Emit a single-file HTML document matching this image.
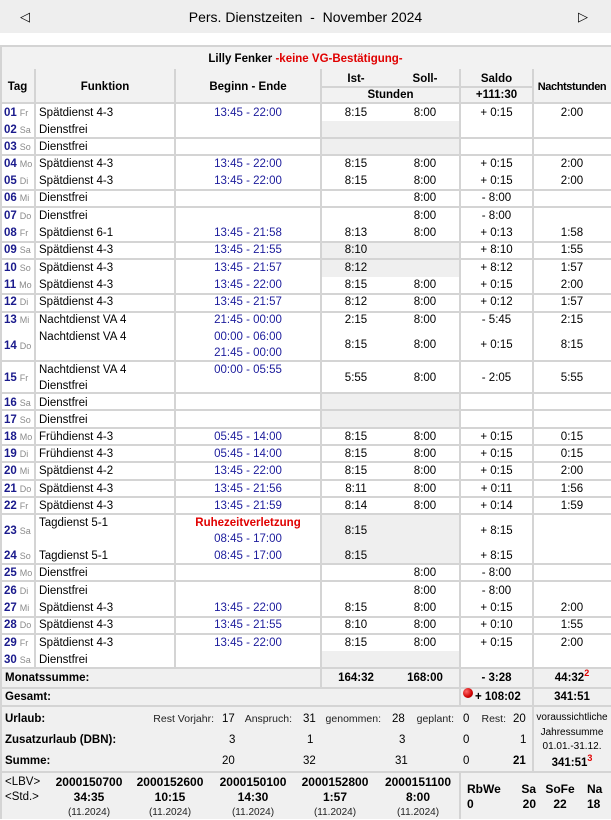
<!DOCTYPE html>
<html><head><meta charset="utf-8"><style>
*{margin:0;padding:0;box-sizing:border-box}
body{width:611px;height:819px;overflow:hidden;background:#fff;font-family:"Liberation Sans",Arial,sans-serif;font-size:11.5px;color:#000;position:relative}
div,span.a{position:absolute}
.h{height:2px;background:#d4d4d4;left:0;width:611px}
.v{width:2px;background:#d4d4d4}
.g{background:#efefef}
.t{position:absolute;white-space:nowrap;line-height:14px;height:14px}
.d{left:4px;color:#1a1a8c;font-weight:bold;font-size:11.5px}
.d i{font-style:normal;font-weight:normal;color:#8a8a8a;font-size:9px;margin-left:3px}
.f{left:39px}
.tm{left:175px;width:146px;text-align:center;color:#1c1c9c}
.is{left:326px;width:60px;text-align:center}
.so{left:395px;width:60px;text-align:center}
.sa{left:460px;width:73px;text-align:center}
.na{left:533px;width:78px;text-align:center}
.b{font-weight:bold}
.s{font-size:10.5px;color:#222}
</style></head><body>
<div class="g" style="left:0;top:0;width:611px;height:33px;background:#eeeeee"></div>
<div class="t" style="left:20px;top:10px;font-size:13px">◁</div>
<div class="t" style="left:578px;top:10px;font-size:13px">▷</div>
<div class="t" style="left:0;width:611px;text-align:center;top:10px;font-size:14px">Pers. Dienstzeiten &nbsp;-&nbsp; November 2024</div>

<div class="g" style="left:0;top:46px;width:611px;height:57px;background:#f2f2f2"></div>
<div class="g" style="left:321px;top:121px;width:139px;height:34px"></div>
<div class="g" style="left:321px;top:242px;width:139px;height:35px"></div>
<div class="g" style="left:321px;top:393px;width:139px;height:35px"></div>
<div class="g" style="left:321px;top:514px;width:139px;height:50px"></div>
<div class="g" style="left:321px;top:651px;width:139px;height:17px"></div>
<div class="g" style="left:0;top:668px;width:611px;height:151px;background:#f0f0f0"></div>

<div class="h" style="top:45px"></div>
<div class="h" style="top:102px"></div>
<div class="h" style="top:137px"></div>
<div class="h" style="top:154px"></div>
<div class="h" style="top:189px"></div>
<div class="h" style="top:206px"></div>
<div class="h" style="top:241px"></div>
<div class="h" style="top:258px"></div>
<div class="h" style="top:293px"></div>
<div class="h" style="top:311px"></div>
<div class="h" style="top:360px"></div>
<div class="h" style="top:392px"></div>
<div class="h" style="top:409px"></div>
<div class="h" style="top:427px"></div>
<div class="h" style="top:444px"></div>
<div class="h" style="top:461px"></div>
<div class="h" style="top:479px"></div>
<div class="h" style="top:496px"></div>
<div class="h" style="top:513px"></div>
<div class="h" style="top:563px"></div>
<div class="h" style="top:580px"></div>
<div class="h" style="top:616px"></div>
<div class="h" style="top:633px"></div>
<div class="h" style="top:667px"></div>
<div class="h" style="top:687px"></div>
<div class="h" style="top:705px"></div>
<div class="h" style="top:771px"></div>
<div class="h" style="top:86px;left:321px;width:212px"></div>
<div class="v" style="left:0;top:45px;height:774px"></div>
<div class="v" style="left:34px;top:69px;height:599px"></div>
<div class="v" style="left:174px;top:69px;height:599px"></div>
<div class="v" style="left:320px;top:69px;height:619px"></div>
<div class="v" style="left:459px;top:69px;height:636px"></div>
<div class="v" style="left:532px;top:69px;height:703px"></div>
<div class="v" style="left:459px;top:771px;height:48px"></div>

<div class="t b" style="left:0;width:611px;text-align:center;top:52px">Lilly Fenker <span style="color:#e00000">-keine VG-Bestätigung-</span></div>
<div class="t b" style="left:0;width:35px;text-align:center;top:80px">Tag</div>
<div class="t b" style="left:35px;width:140px;text-align:center;top:80px">Funktion</div>
<div class="t b" style="left:175px;width:146px;text-align:center;top:80px">Beginn - Ende</div>
<div class="t b" style="left:326px;width:60px;text-align:center;top:72px">Ist-</div>
<div class="t b" style="left:395px;width:60px;text-align:center;top:72px">Soll-</div>
<div class="t b" style="left:321px;width:139px;text-align:center;top:88px">Stunden</div>
<div class="t b sa" style="top:72px">Saldo</div>
<div class="t b sa" style="top:88px">+111:30</div>
<div class="t b na" style="top:80px;font-size:11px;letter-spacing:-0.4px">Nachtstunden</div>

<div class="t d" style="top:106px">01<i>Fr</i></div><div class="t f" style="top:106px">Spätdienst 4-3</div><div class="t tm" style="top:106px">13:45 - 22:00</div><div class="t is" style="top:106px">8:15</div><div class="t so" style="top:106px">8:00</div><div class="t sa" style="top:106px">+ 0:15</div><div class="t na" style="top:106px">2:00</div>
<div class="t d" style="top:123px">02<i>Sa</i></div><div class="t f" style="top:123px">Dienstfrei</div>
<div class="t d" style="top:140px">03<i>So</i></div><div class="t f" style="top:140px">Dienstfrei</div>
<div class="t d" style="top:157px">04<i>Mo</i></div><div class="t f" style="top:157px">Spätdienst 4-3</div><div class="t tm" style="top:157px">13:45 - 22:00</div><div class="t is" style="top:157px">8:15</div><div class="t so" style="top:157px">8:00</div><div class="t sa" style="top:157px">+ 0:15</div><div class="t na" style="top:157px">2:00</div>
<div class="t d" style="top:174px">05<i>Di</i></div><div class="t f" style="top:174px">Spätdienst 4-3</div><div class="t tm" style="top:174px">13:45 - 22:00</div><div class="t is" style="top:174px">8:15</div><div class="t so" style="top:174px">8:00</div><div class="t sa" style="top:174px">+ 0:15</div><div class="t na" style="top:174px">2:00</div>
<div class="t d" style="top:191px">06<i>Mi</i></div><div class="t f" style="top:191px">Dienstfrei</div><div class="t so" style="top:191px">8:00</div><div class="t sa" style="top:191px">- 8:00</div>
<div class="t d" style="top:209px">07<i>Do</i></div><div class="t f" style="top:209px">Dienstfrei</div><div class="t so" style="top:209px">8:00</div><div class="t sa" style="top:209px">- 8:00</div>
<div class="t d" style="top:226px">08<i>Fr</i></div><div class="t f" style="top:226px">Spätdienst 6-1</div><div class="t tm" style="top:226px">13:45 - 21:58</div><div class="t is" style="top:226px">8:13</div><div class="t so" style="top:226px">8:00</div><div class="t sa" style="top:226px">+ 0:13</div><div class="t na" style="top:226px">1:58</div>
<div class="t d" style="top:243px">09<i>Sa</i></div><div class="t f" style="top:243px">Spätdienst 4-3</div><div class="t tm" style="top:243px">13:45 - 21:55</div><div class="t is" style="top:243px">8:10</div><div class="t sa" style="top:243px">+ 8:10</div><div class="t na" style="top:243px">1:55</div>
<div class="t d" style="top:261px">10<i>So</i></div><div class="t f" style="top:261px">Spätdienst 4-3</div><div class="t tm" style="top:261px">13:45 - 21:57</div><div class="t is" style="top:261px">8:12</div><div class="t sa" style="top:261px">+ 8:12</div><div class="t na" style="top:261px">1:57</div>
<div class="t d" style="top:278px">11<i>Mo</i></div><div class="t f" style="top:278px">Spätdienst 4-3</div><div class="t tm" style="top:278px">13:45 - 22:00</div><div class="t is" style="top:278px">8:15</div><div class="t so" style="top:278px">8:00</div><div class="t sa" style="top:278px">+ 0:15</div><div class="t na" style="top:278px">2:00</div>
<div class="t d" style="top:295px">12<i>Di</i></div><div class="t f" style="top:295px">Spätdienst 4-3</div><div class="t tm" style="top:295px">13:45 - 21:57</div><div class="t is" style="top:295px">8:12</div><div class="t so" style="top:295px">8:00</div><div class="t sa" style="top:295px">+ 0:12</div><div class="t na" style="top:295px">1:57</div>
<div class="t d" style="top:313px">13<i>Mi</i></div><div class="t f" style="top:313px">Nachtdienst VA 4</div><div class="t tm" style="top:313px">21:45 - 00:00</div><div class="t is" style="top:313px">2:15</div><div class="t so" style="top:313px">8:00</div><div class="t sa" style="top:313px">- 5:45</div><div class="t na" style="top:313px">2:15</div>
<div class="t d" style="top:339px">14<i>Do</i></div><div class="t f" style="top:330px">Nachtdienst VA 4</div><div class="t tm" style="top:330px">00:00 - 06:00</div><div class="t tm" style="top:346px">21:45 - 00:00</div><div class="t is" style="top:338px">8:15</div><div class="t so" style="top:338px">8:00</div><div class="t sa" style="top:338px">+ 0:15</div><div class="t na" style="top:338px">8:15</div>
<div class="t d" style="top:371px">15<i>Fr</i></div><div class="t f" style="top:363px">Nachtdienst VA 4</div><div class="t f" style="top:379px">Dienstfrei</div><div class="t tm" style="top:363px">00:00 - 05:55</div><div class="t is" style="top:371px">5:55</div><div class="t so" style="top:371px">8:00</div><div class="t sa" style="top:371px">- 2:05</div><div class="t na" style="top:371px">5:55</div>
<div class="t d" style="top:396px">16<i>Sa</i></div><div class="t f" style="top:396px">Dienstfrei</div>
<div class="t d" style="top:413px">17<i>So</i></div><div class="t f" style="top:413px">Dienstfrei</div>
<div class="t d" style="top:430px">18<i>Mo</i></div><div class="t f" style="top:430px">Frühdienst 4-3</div><div class="t tm" style="top:430px">05:45 - 14:00</div><div class="t is" style="top:430px">8:15</div><div class="t so" style="top:430px">8:00</div><div class="t sa" style="top:430px">+ 0:15</div><div class="t na" style="top:430px">0:15</div>
<div class="t d" style="top:447px">19<i>Di</i></div><div class="t f" style="top:447px">Frühdienst 4-3</div><div class="t tm" style="top:447px">05:45 - 14:00</div><div class="t is" style="top:447px">8:15</div><div class="t so" style="top:447px">8:00</div><div class="t sa" style="top:447px">+ 0:15</div><div class="t na" style="top:447px">0:15</div>
<div class="t d" style="top:464px">20<i>Mi</i></div><div class="t f" style="top:464px">Spätdienst 4-2</div><div class="t tm" style="top:464px">13:45 - 22:00</div><div class="t is" style="top:464px">8:15</div><div class="t so" style="top:464px">8:00</div><div class="t sa" style="top:464px">+ 0:15</div><div class="t na" style="top:464px">2:00</div>
<div class="t d" style="top:482px">21<i>Do</i></div><div class="t f" style="top:482px">Spätdienst 4-3</div><div class="t tm" style="top:482px">13:45 - 21:56</div><div class="t is" style="top:482px">8:11</div><div class="t so" style="top:482px">8:00</div><div class="t sa" style="top:482px">+ 0:11</div><div class="t na" style="top:482px">1:56</div>
<div class="t d" style="top:499px">22<i>Fr</i></div><div class="t f" style="top:499px">Spätdienst 4-3</div><div class="t tm" style="top:499px">13:45 - 21:59</div><div class="t is" style="top:499px">8:14</div><div class="t so" style="top:499px">8:00</div><div class="t sa" style="top:499px">+ 0:14</div><div class="t na" style="top:499px">1:59</div>
<div class="t d" style="top:524px">23<i>Sa</i></div><div class="t f" style="top:516px">Tagdienst 5-1</div><div class="t tm b" style="top:516px;color:#e00000">Ruhezeitverletzung</div><div class="t tm" style="top:532px">08:45 - 17:00</div><div class="t is" style="top:524px">8:15</div><div class="t sa" style="top:524px">+ 8:15</div>
<div class="t d" style="top:549px">24<i>So</i></div><div class="t f" style="top:549px">Tagdienst 5-1</div><div class="t tm" style="top:549px">08:45 - 17:00</div><div class="t is" style="top:549px">8:15</div><div class="t sa" style="top:549px">+ 8:15</div>
<div class="t d" style="top:566px">25<i>Mo</i></div><div class="t f" style="top:566px">Dienstfrei</div><div class="t so" style="top:566px">8:00</div><div class="t sa" style="top:566px">- 8:00</div>
<div class="t d" style="top:584px">26<i>Di</i></div><div class="t f" style="top:584px">Dienstfrei</div><div class="t so" style="top:584px">8:00</div><div class="t sa" style="top:584px">- 8:00</div>
<div class="t d" style="top:601px">27<i>Mi</i></div><div class="t f" style="top:601px">Spätdienst 4-3</div><div class="t tm" style="top:601px">13:45 - 22:00</div><div class="t is" style="top:601px">8:15</div><div class="t so" style="top:601px">8:00</div><div class="t sa" style="top:601px">+ 0:15</div><div class="t na" style="top:601px">2:00</div>
<div class="t d" style="top:618px">28<i>Do</i></div><div class="t f" style="top:618px">Spätdienst 4-3</div><div class="t tm" style="top:618px">13:45 - 21:55</div><div class="t is" style="top:618px">8:10</div><div class="t so" style="top:618px">8:00</div><div class="t sa" style="top:618px">+ 0:10</div><div class="t na" style="top:618px">1:55</div>
<div class="t d" style="top:636px">29<i>Fr</i></div><div class="t f" style="top:636px">Spätdienst 4-3</div><div class="t tm" style="top:636px">13:45 - 22:00</div><div class="t is" style="top:636px">8:15</div><div class="t so" style="top:636px">8:00</div><div class="t sa" style="top:636px">+ 0:15</div><div class="t na" style="top:636px">2:00</div>
<div class="t d" style="top:653px">30<i>Sa</i></div><div class="t f" style="top:653px">Dienstfrei</div>

<div class="t b" style="left:5px;top:671px">Monatssumme:</div>
<div class="t b is" style="top:671px">164:32</div><div class="t b so" style="top:671px">168:00</div><div class="t b sa" style="top:671px">- 3:28</div>
<div class="t b na" style="top:671px">44:32<sup style="color:#e00000;font-size:9px;line-height:0">2</sup></div>
<div class="t b" style="left:5px;top:690px">Gesamt:</div>
<div style="left:463px;top:688px;width:10px;height:10px;border-radius:50%;background:radial-gradient(circle at 35% 35%,#ff6a6a,#d00000 60%,#700000)"></div>
<div class="t b" style="left:475px;top:690px">+ 108:02</div>
<div class="t b na" style="top:690px">341:51</div>

<div class="t b" style="left:5px;top:712px">Urlaub:</div>
<div class="t s" style="left:140px;width:74px;text-align:right;top:712px">Rest Vorjahr:</div><div class="t" style="left:222px;top:712px">17</div>
<div class="t s" style="left:240px;width:52px;text-align:right;top:712px">Anspruch:</div><div class="t" style="left:303px;top:712px">31</div>
<div class="t s" style="left:320px;width:61px;text-align:right;top:712px">genommen:</div><div class="t" style="left:392px;top:712px">28</div>
<div class="t s" style="left:410px;width:44px;text-align:right;top:712px">geplant:</div><div class="t" style="left:463px;top:712px">0</div>
<div class="t s" style="left:480px;width:26px;text-align:right;top:712px">Rest:</div><div class="t" style="left:513px;top:712px">20</div>

<div class="t b" style="left:5px;top:733px">Zusatzurlaub (DBN):</div>
<div class="t" style="left:229px;top:733px">3</div><div class="t" style="left:307px;top:733px">1</div><div class="t" style="left:399px;top:733px">3</div><div class="t" style="left:463px;top:733px">0</div><div class="t" style="left:520px;top:733px">1</div>
<div class="t b" style="left:5px;top:754px">Summe:</div>
<div class="t" style="left:222px;top:754px">20</div><div class="t" style="left:303px;top:754px">32</div><div class="t" style="left:395px;top:754px">31</div><div class="t" style="left:463px;top:754px">0</div><div class="t b" style="left:513px;top:754px">21</div>

<div class="t na" style="top:711px;font-size:10px">voraussichtliche</div>
<div class="t na" style="top:726px;font-size:10px">Jahressumme</div>
<div class="t na" style="top:740px;font-size:10px">01.01.-31.12.</div>
<div class="t b na" style="top:756px">341:51<sup style="color:#e00000;font-size:9px;line-height:0">3</sup></div>

<div class="t" style="left:5px;top:775px">&lt;LBV&gt;</div>
<div class="t" style="left:5px;top:790px">&lt;Std.&gt;</div>
<div class="t b" style="left:49px;width:80px;text-align:center;top:775px;font-size:12px">2000150700</div>
<div class="t b" style="left:130px;width:80px;text-align:center;top:775px;font-size:12px">2000152600</div>
<div class="t b" style="left:213px;width:80px;text-align:center;top:775px;font-size:12px">2000150100</div>
<div class="t b" style="left:295px;width:80px;text-align:center;top:775px;font-size:12px">2000152800</div>
<div class="t b" style="left:378px;width:80px;text-align:center;top:775px;font-size:12px">2000151100</div>
<div class="t b" style="left:49px;width:80px;text-align:center;top:790px;font-size:12px">34:35</div>
<div class="t b" style="left:130px;width:80px;text-align:center;top:790px;font-size:12px">10:15</div>
<div class="t b" style="left:213px;width:80px;text-align:center;top:790px;font-size:12px">14:30</div>
<div class="t b" style="left:295px;width:80px;text-align:center;top:790px;font-size:12px">1:57</div>
<div class="t b" style="left:378px;width:80px;text-align:center;top:790px;font-size:12px">8:00</div>
<div class="t s" style="left:49px;width:80px;text-align:center;top:806px;font-size:10px">(11.2024)</div>
<div class="t s" style="left:130px;width:80px;text-align:center;top:806px;font-size:10px">(11.2024)</div>
<div class="t s" style="left:213px;width:80px;text-align:center;top:806px;font-size:10px">(11.2024)</div>
<div class="t s" style="left:295px;width:80px;text-align:center;top:806px;font-size:10px">(11.2024)</div>
<div class="t s" style="left:378px;width:80px;text-align:center;top:806px;font-size:10px">(11.2024)</div>

<div class="t b" style="left:467px;top:782px;font-size:12px">RbWe</div>
<div class="t b" style="left:518px;width:18px;text-align:right;top:782px;font-size:12px">Sa</div>
<div class="t b" style="left:540px;width:40px;text-align:center;top:782px;font-size:12px">SoFe</div>
<div class="t b" style="left:587px;top:782px;font-size:12px">Na</div>
<div class="t b" style="left:467px;top:797px;font-size:12px">0</div>
<div class="t b" style="left:518px;width:18px;text-align:right;top:797px;font-size:12px">20</div>
<div class="t b" style="left:540px;width:40px;text-align:center;top:797px;font-size:12px">22</div>
<div class="t b" style="left:587px;top:797px;font-size:12px">18</div>
</body></html>
